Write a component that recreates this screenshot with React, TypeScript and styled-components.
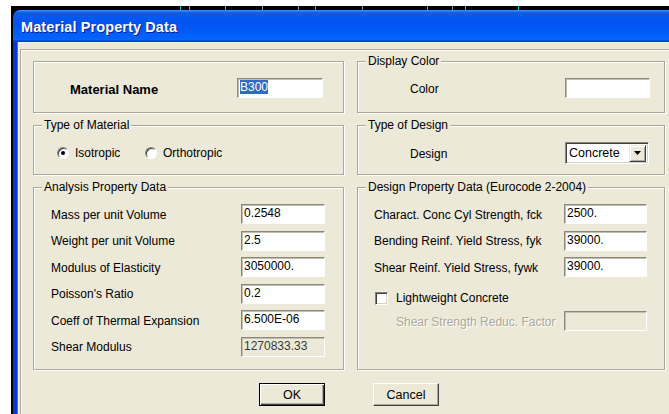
import styled, { createGlobalStyle } from 'styled-components';

const GlobalStyle = createGlobalStyle`
  html, body {
    margin: 0;
    padding: 0;
    overflow: hidden;
    background: #fff;
    scrollbar-width: none;
  }
  body {
    font-family: "Liberation Sans", Arial, sans-serif;
    font-size: 12px;
    color: #000;
  }
`;

const Screen = styled.div`
  width: 100vw;
  height: 100vh;
  overflow: hidden;
  padding: 6px 0 0 11px;
  box-sizing: border-box;
  background: #fff;
`;

const Backdrop = styled.div`
  display: flex;
  flex-direction: column;
  background: #000;
  width: 900px;
`;

const Window = styled.div`
  margin-left: 2px;
  width: 890px;
  display: flex;
  flex-direction: column;
  border-radius: 7px 7px 0 0;
  overflow: hidden;
`;

const TitleBar = styled.div`
  flex-shrink: 0;
  height: 32px;
  box-sizing: border-box;
  padding: 9px 0 0 8px;
  background: linear-gradient(
    to bottom,
    #3d95ff 0%,
    #0a5cf0 9%,
    #0053ee 40%,
    #0062fb 86%,
    #0766ff 92%,
    #0046dc 96%,
    #003cd2 100%
  );
  color: #fff;
  font-weight: bold;
  font-size: 14.5px;
  letter-spacing: 0.1px;
  text-shadow: 1px 1px 0 #0a1e8c;
`;

const Client = styled.div`
  background: #ece9d8;
  border-left: 4px solid #0838d0;
  box-shadow: inset 1px 0 0 #2f78f0, inset 0 1px 0 #f4f2e8;
  padding: 7px 0 0 3px;
`;

const Panel = styled.div`
  width: 860px;
  height: 400px;
  box-sizing: border-box;
  border: 1px solid #aca899;
  box-shadow: inset 1px 1px 0 #fff;
  padding: 11px 0 0 12px;
`;

const Columns = styled.div`
  display: grid;
  grid-template-columns: 311px 308px;
  grid-template-rows: 52px 50px 183px;
  column-gap: 13px;
  row-gap: 12px;
`;

const Group = styled.div`
  box-sizing: border-box;
  border: 1px solid #aca899;
  box-shadow: inset 1px 1px 0 #fff, 1px 1px 0 #fff;
  display: flex;
  flex-direction: column;
`;

const Legend = styled.span`
  align-self: flex-start;
  margin: -8px 0 0 8px;
  padding: 0 2px;
  line-height: 14px;
  background: #ece9d8;
`;

const FieldList = styled.div<{ $top: number; $gap?: number }>`
  display: flex;
  flex-direction: column;
  gap: ${p => p.$gap ?? 6.6}px;
  margin-top: ${p => p.$top}px;
`;

const FieldRow = styled.div<{ $indent: number; $labelWidth: number; $mt?: number }>`
  display: grid;
  grid-template-columns: ${p => p.$labelWidth}px auto;
  align-items: center;
  height: 20px;
  padding-left: ${p => p.$indent}px;
  margin-top: ${p => p.$mt ?? 0}px;
`;

const Label = styled.span<{ $bold?: boolean; $disabled?: boolean }>`
  white-space: nowrap;
  padding-top: ${p => (p.$bold ? 3 : 1)}px;
  font-weight: ${p => (p.$bold ? 'bold' : 'normal')};
  font-size: ${p => (p.$bold ? '13px' : '12px')};
  color: ${p => (p.$disabled ? '#aca899' : '#000')};
  text-shadow: ${p => (p.$disabled ? '1px 1px 0 #fff' : 'none')};
`;

const TextBox = styled.div<{ $w: number; $disabled?: boolean }>`
  box-sizing: border-box;
  width: ${p => p.$w}px;
  height: 20px;
  padding: 1px 0 0 2px;
  line-height: 15px;
  border-style: solid;
  border-width: 1px;
  border-color: #8a887c #fff #fff #8a887c;
  box-shadow: inset 1px 1px 0 #c2bfae;
  background: ${p => (p.$disabled ? '#ece9d8' : '#fff')};
  color: ${p => (p.$disabled ? '#3a3a3a' : '#000')};
  white-space: nowrap;
  overflow: hidden;
`;

const Selected = styled.span`
  background: #316ac5;
  color: #fff;
`;

const Select = styled.div`
  box-sizing: border-box;
  width: 84px;
  height: 22px;
  display: flex;
  align-items: center;
  justify-content: space-between;
  padding: 0 2px 0 3px;
  border-style: solid;
  border-width: 1px;
  border-color: #8a887c #fff #fff #8a887c;
  box-shadow: inset 1px 1px 0 #404040, inset -1px -1px 0 #d4d0c8;
  background: #fff;
  font-size: 12.5px;
`;

const DropButton = styled.span`
  box-sizing: border-box;
  width: 17px;
  height: 17px;
  display: flex;
  align-items: center;
  justify-content: center;
  background: #ece9d8;
  border-style: solid;
  border-width: 1px;
  border-color: #ece9d8 #404040 #404040 #ece9d8;
  box-shadow: inset 1px 1px 0 #fff, inset -1px -1px 0 #aca899;
`;

const Choices = styled.div`
  display: flex;
  align-items: center;
  height: 16px;
  margin: 13px 0 0 23px;
`;

const Choice = styled.label`
  display: flex;
  align-items: center;
  gap: 6px;
  width: 88px;
`;

const Radio = styled.span<{ $checked?: boolean }>`
  box-sizing: border-box;
  width: 12px;
  height: 12px;
  border-radius: 50%;
  border: 1px solid;
  border-color: #808080 #fff #fff #808080;
  box-shadow: inset 1px 1px 0 #404040;
  background: #fff;
  display: flex;
  align-items: center;
  justify-content: center;

  &::after {
    content: '';
    width: 4px;
    height: 4px;
    border-radius: 50%;
    background: ${p => (p.$checked ? '#000' : 'transparent')};
  }
`;

const CheckRow = styled.label`
  display: flex;
  align-items: center;
  gap: 8px;
  height: 20px;
  padding-left: 17px;
  margin-top: 11px;
`;

const CheckBox = styled.span`
  box-sizing: border-box;
  width: 13px;
  height: 13px;
  border: 1px solid;
  border-color: #808080 #fff #fff #808080;
  box-shadow: inset 1px 1px 0 #404040, inset -1px -1px 0 #d4d0c8;
  background: #fff;
`;

const Buttons = styled.div`
  display: flex;
  justify-content: center;
  gap: 48px;
  width: 632px;
  margin-top: 13px;
`;

const Button = styled.button<{ $default?: boolean }>`
  box-sizing: border-box;
  width: 66px;
  height: 23px;
  padding: 0;
  font: inherit;
  font-size: 12.5px;
  color: #000;
  background: #ece9d8;
  border: 1px solid;
  border-color: ${p => (p.$default ? '#000' : '#fff #404040 #404040 #fff')};
  box-shadow: ${p =>
    p.$default
      ? 'inset 1px 1px 0 #fff, inset -1px -1px 0 #404040, inset -2px -2px 0 #aca899'
      : 'inset -1px -1px 0 #aca899'};
`;

// thin grid lines of the drawing window behind the dialog
const stripLines: { x: number; c: string }[] = [
  { x: 169, c: '#00d0d0' },
  { x: 178, c: '#9a9a9a' },
  { x: 214, c: '#9a9a9a' },
  { x: 251, c: '#9a9a9a' },
  { x: 287, c: '#9a9a9a' },
  { x: 304, c: '#9a9a9a' },
  { x: 351, c: '#9a9a9a' },
  { x: 416, c: '#9a9a9a' },
  { x: 441, c: '#9a9a9a' },
  { x: 454, c: '#9a9a9a' },
  { x: 507, c: '#00d0d0' },
];

function GridStrip() {
  return (
    <svg width={900} height={4} style={{ display: 'block', flexShrink: 0 }}>
      {stripLines.map(l => (
        <line key={l.x} x1={l.x + 0.5} x2={l.x + 0.5} y1={0} y2={4} stroke={l.c} strokeWidth={1} />
      ))}
    </svg>
  );
}

function Arrow() {
  return (
    <svg width={7} height={4} viewBox="0 0 7 4">
      <path d="M0 0h7L3.5 4z" fill="#000" />
    </svg>
  );
}

const analysis = [
  ['Mass per unit Volume', '0.2548'],
  ['Weight per unit Volume', '2.5'],
  ['Modulus of Elasticity', '3050000.'],
  ["Poisson's Ratio", '0.2'],
  ['Coeff of Thermal Expansion', '6.500E-06'],
];

const design = [
  ['Charact. Conc Cyl Strength, fck', '2500.'],
  ['Bending Reinf. Yield Stress, fyk', '39000.'],
  ['Shear Reinf. Yield Stress, fywk', '39000.'],
];

export default function App() {
  return (
    <>
      <GlobalStyle />
      <Screen>
        <Backdrop>
          <GridStrip />
          <Window>
            <TitleBar>Material Property Data</TitleBar>
            <Client>
              <Panel>
                <Columns>
                  <Group>
                    <FieldRow $indent={36} $labelWidth={167} $mt={16}>
                      <Label $bold>Material Name</Label>
                      <TextBox $w={86}>
                        <Selected>B300</Selected>
                      </TextBox>
                    </FieldRow>
                  </Group>
                  <Group>
                    <Legend>Display Color</Legend>
                    <FieldRow $indent={52} $labelWidth={155} $mt={10}>
                      <Label>Color</Label>
                      <TextBox $w={85} />
                    </FieldRow>
                  </Group>

                  <Group>
                    <Legend>Type of Material</Legend>
                    <Choices>
                      <Choice>
                        <Radio $checked />
                        Isotropic
                      </Choice>
                      <Choice>
                        <Radio />
                        Orthotropic
                      </Choice>
                    </Choices>
                  </Group>
                  <Group>
                    <Legend>Type of Design</Legend>
                    <FieldRow $indent={52} $labelWidth={155} $mt={10}>
                      <Label>Design</Label>
                      <Select>
                        Concrete
                        <DropButton>
                          <Arrow />
                        </DropButton>
                      </Select>
                    </FieldRow>
                  </Group>

                  <Group>
                    <Legend>Analysis Property Data</Legend>
                    <FieldList $top={10}>
                      {analysis.map(([name, value]) => (
                        <FieldRow key={name} $indent={17} $labelWidth={190}>
                          <Label>{name}</Label>
                          <TextBox $w={84}>{value}</TextBox>
                        </FieldRow>
                      ))}
                      <FieldRow $indent={17} $labelWidth={190}>
                        <Label>Shear Modulus</Label>
                        <TextBox $w={84} $disabled>
                          1270833.33
                        </TextBox>
                      </FieldRow>
                    </FieldList>
                  </Group>
                  <Group>
                    <Legend>Design Property Data (Eurocode 2-2004)</Legend>
                    <FieldList $top={10}>
                      {design.map(([name, value]) => (
                        <FieldRow key={name} $indent={16} $labelWidth={190}>
                          <Label>{name}</Label>
                          <TextBox $w={83}>{value}</TextBox>
                        </FieldRow>
                      ))}
                    </FieldList>
                    <CheckRow>
                      <CheckBox />
                      Lightweight Concrete
                    </CheckRow>
                    <FieldRow $indent={38} $labelWidth={168} $mt={3}>
                      <Label $disabled>Shear Strength Reduc. Factor</Label>
                      <TextBox $w={83} $disabled />
                    </FieldRow>
                  </Group>
                </Columns>
                <Buttons>
                  <Button $default>OK</Button>
                  <Button>Cancel</Button>
                </Buttons>
              </Panel>
            </Client>
          </Window>
        </Backdrop>
      </Screen>
    </>
  );
}
